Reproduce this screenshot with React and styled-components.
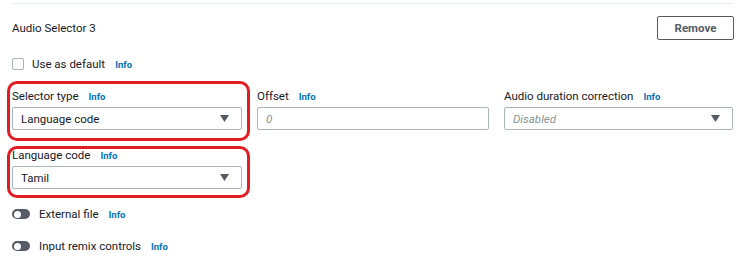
import React from "react";
import styled, { createGlobalStyle } from "styled-components";

const GlobalStyle = createGlobalStyle`
  body {
    margin: 0;
    background: #ffffff;
    font-family: Roboto, "Open Sans", "Liberation Sans", Arial, sans-serif;
    color: #16191f;
  }
`;

const Page = styled.div`
  padding: 3px 9px 0 12px;
`;

const Divider = styled.div`
  height: 1px;
  background: #eaeded;
  margin-bottom: 12px;
`;

const Header = styled.div`
  display: flex;
  justify-content: space-between;
  align-items: center;
  height: 24px;
`;

const Title = styled.div`
  font-size: 11.5px;
  color: #16191f;
`;

const Button = styled.button`
  height: 24px;
  width: 77px;
  margin-right: -1px;
  border: 1px solid #545b64;
  border-radius: 2px;
  background: #fff;
  color: #545b64;
  font-family: inherit;
  font-weight: 700;
  font-size: 11.5px;
`;

const Row = styled.div`
  display: flex;
  align-items: center;
  height: 12px;
  margin-top: ${(p) => p.$mt}px;
  font-size: 11.5px;
`;

const Checkbox = styled.span`
  width: 10px;
  height: 10px;
  border: 1px solid #aab7b8;
  border-radius: 2px;
  margin-right: 8px;
`;

const Toggle = styled.span`
  position: relative;
  width: 18px;
  height: 10px;
  border-radius: 5px;
  background: #545b64;
  margin-right: 9px;
  &::after {
    content: "";
    position: absolute;
    left: 1.5px;
    top: 1.5px;
    width: 7px;
    height: 7px;
    border-radius: 50%;
    background: #fff;
  }
`;

const Info = styled.span`
  color: #0073bb;
  font-weight: 700;
  font-size: 9.5px;
  margin-left: ${(p) => p.$ml || 10}px;
`;

const Grid = styled.div`
  display: grid;
  grid-template-columns: 230px 232px 229px;
  column-gap: 15px;
  margin-top: ${(p) => p.$mt}px;
`;

const Field = styled.div`
  position: relative;
  display: flex;
  flex-direction: column;
  gap: 3px;
`;

const Highlight = styled.div`
  position: absolute;
  left: -5px;
  right: -8px;
  top: ${(p) => p.$top}px;
  bottom: ${(p) => p.$bottom}px;
  border: 3px solid #e31b23;
  border-radius: 10px;
  pointer-events: none;
`;

const Label = styled.div`
  display: flex;
  align-items: center;
  height: 16px;
  font-size: 11.5px;
`;

const Box = styled.div`
  box-sizing: border-box;
  height: 23px;
  border: 1px solid #aab7b8;
  border-radius: 2px;
  display: flex;
  align-items: center;
  justify-content: space-between;
  padding: 0 12px 0 8px;
  font-size: 11.5px;
  color: ${(p) => (p.$placeholder ? "#879596" : "#16191f")};
  font-style: ${(p) => (p.$placeholder ? "italic" : "normal")};
`;

const Arrow = () => (
  <svg width="9" height="7" viewBox="0 0 9 7">
    <path d="M0 0 H9 L4.5 7 Z" fill="#545b64" />
  </svg>
);

export default function App() {
  return (
    <>
      <GlobalStyle />
      <Page>
        <Divider />
        <Header>
          <Title>Audio Selector 3</Title>
          <Button>Remove</Button>
        </Header>
        <Row $mt={18}>
          <Checkbox />
          Use as default
          <Info>Info</Info>
        </Row>
        <Grid $mt={18}>
          <Field>
            <Label>
              Selector type<Info>Info</Info>
            </Label>
            <Box>
              Language code
              <Arrow />
            </Box>
            <Highlight $top={-7} $bottom={-11} />
          </Field>
          <Field>
            <Label>
              Offset<Info>Info</Info>
            </Label>
            <Box $placeholder>0</Box>
          </Field>
          <Field>
            <Label>
              Audio duration correction<Info>Info</Info>
            </Label>
            <Box $placeholder>
              Disabled
              <Arrow />
            </Box>
          </Field>
        </Grid>
        <Grid $mt={17}>
          <Field>
            <Label>
              Language code<Info>Info</Info>
            </Label>
            <Box>
              Tamil
              <Arrow />
            </Box>
            <Highlight $top={-1} $bottom={-9} />
          </Field>
        </Grid>
        <Row $mt={19}>
          <Toggle />
          External file
          <Info>Info</Info>
        </Row>
        <Row $mt={20}>
          <Toggle />
          Input remix controls
          <Info>Info</Info>
        </Row>
      </Page>
    </>
  );
}
